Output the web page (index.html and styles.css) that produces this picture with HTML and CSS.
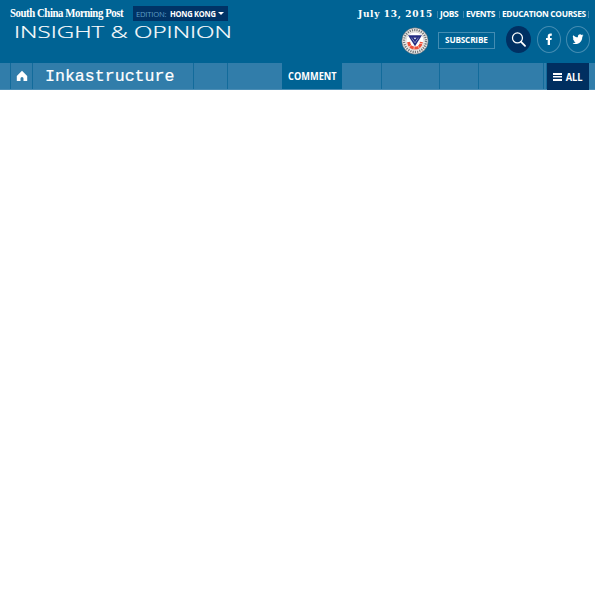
FILE: index.html
```html
<!DOCTYPE html>
<html lang="en">
<head>
<meta charset="utf-8">
<title>Insight &amp; Opinion</title>
<link rel="stylesheet" href="styles.css">
</head>
<body>
<header class="header">
  <div class="brand">
    <div class="brand-top">
      <span class="logo">South China Morning Post</span>
      <div class="edition"><span class="edition-label">EDITION:</span><b class="edition-name">HONG KONG</b><i class="caret"></i></div>
    </div>
    <h1 class="section-title">INSIGHT &amp; OPINION</h1>
  </div>
  <div class="tools">
    <div class="links">
      <span class="date">July 13, 2015</span>
      <a class="jobs"><span>JOBS</span></a><a class="events"><span>EVENTS</span></a><a class="courses"><span>EDUCATION COURSES</span></a><a class="end"></a>
    </div>
    <div class="actions">
      <svg class="seal" viewBox="0 0 28 28">
        <circle cx="14" cy="14" r="13.2" fill="#f3f1ee" stroke="#46545f" stroke-width=".6"/>
        <circle cx="14" cy="14" r="11" fill="none" stroke="#73777b" stroke-width="2.3" stroke-dasharray="1.3 1"/>
        <circle cx="14" cy="14" r="9" fill="#fff" stroke="#aaa" stroke-width=".4"/>
        <path d="M7.6 15q.8 6 6.4 6t6.4-6" fill="none" stroke="#ee5038" stroke-width="3" stroke-dasharray="4 .5"/>
        <path d="M7 8.3h14L14 19.3z" fill="#252d83"/>
        <path d="M10.3 10.7h7.4L14 16z" fill="#fff"/>
        <path d="M11.3 10.2l2.7 3.9 2.7-3.9" fill="none" stroke="#252d83" stroke-width="1.7"/>
      </svg>
      <a class="subscribe"><span>SUBSCRIBE</span></a>
      <a class="round search"><svg viewBox="0 0 24 26"><circle cx="11" cy="11.5" r="4.8" fill="none" stroke="#fff" stroke-width="1.2"/><path d="M14.5 15.2l3.8 4" stroke="#fff" stroke-width="1.7" stroke-linecap="round"/></svg></a>
      <a class="round facebook"><svg viewBox="1 1.5 22 23"><path d="M10.7 18.5v-5H9v-2.1h1.7V10c0-2 1-3 2.8-3h1.3v2.2h-1c-.6 0-.8.4-.8.9v1.3h1.8l-.3 2.1H13v5z" fill="#fff"/></svg></a>
      <a class="round twitter"><svg viewBox="1 1.5 22 23"><path d="M7.2 8.7c1.2 1.3 2.9 2 4.7 2.1-.4-3 2.4-3.7 3.8-2.3l1.5-.5-.8 1.2 1.1-.2-1.2 1.2c.1 4.9-3.6 7.9-7.6 7.3-.9-.1-1.6-.4-2.1-.8 1.2 0 2.1-.2 3-.9-1-.1-1.7-.9-2-1.7h1c-1.1-.4-1.7-1.4-1.7-2.4l.9.2c-1-.8-1.2-2.2-.6-3.2z" fill="#fff"/></svg></a>
    </div>
  </div>
</header>
<nav class="nav">
  <span class="cell gutter"></span>
  <a class="cell home"><svg viewBox="0 0 12 12"><path d="M6 .8L11.2 6v5H7.5V8.6a1.5 1.5 0 0 0-3 0V11H.8V6z" fill="#fff"/></svg></a>
  <a class="cell title"><span>Inkastructure</span></a>
  <span class="cell c1"></span>
  <span class="cell c2"></span>
  <a class="comment"><span>COMMENT</span></a>
  <span class="cell c3"></span>
  <span class="cell c4"></span>
  <span class="cell c5"></span>
  <span class="cell c6"></span>
  <span class="cell c7"></span>
  <a class="all"><i class="burger"></i><span>ALL</span></a>
</nav>
<main class="content"></main>
</body>
</html>
```
FILE: styles.css
```css
* { box-sizing: border-box; }
body { margin: 0; background: #fff; color: #fff; font-family: "Open Sans", sans-serif; overflow: hidden; }
.header { height: 63px; background: #006394; display: flex; justify-content: space-between; white-space: nowrap; }
.brand { padding: 6px 0 0 10px; }
.brand-top { display: flex; height: 15px; }
.logo { width: 123px; font: bold 12px/15px "Liberation Serif", serif; letter-spacing: -0.5px; transform: scaleX(0.9); transform-origin: 0 0; }
.edition { width: 95px; background: #003366; display: flex; align-items: center; padding-left: 3px; font-size: 8px; line-height: 15px; }
.edition-label { width: 34px; color: #5c9dc4; letter-spacing: -0.25px; transform: scaleX(0.96); transform-origin: 0 0; }
.edition-name { width: 48px; transform: scaleX(0.94); letter-spacing: -0.25px; transform-origin: 0 0; }
.caret { border: 3px solid transparent; border-top: 3px solid #fff; border-bottom: 0; }
.section-title { margin: 0 0 0 4px; font-size: 17px; line-height: 22px; font-weight: 300; -webkit-text-stroke: 0.2px #fff; transform: scaleX(1.42); transform-origin: 0 0; width: 150px; }
.tools { width: 237px; padding-top: 7px; }
.links { display: flex; height: 14px; font-size: 9px; line-height: 14px; font-weight: 700; }
.links a { background: linear-gradient(#3c86ad, #3c86ad) 0 4px / 1px 7px no-repeat; padding-left: 3px; letter-spacing: -0.35px; }
.links a span { display: inline-block; transform: scaleX(0.93); transform-origin: 0 0; }
.date { width: 79px; font: bold 9px/14px "DejaVu Serif", serif; letter-spacing: 0.65px; }
.jobs { width: 26px; }
.events { width: 36px; }
.courses { width: 89px; }
.end { width: 5px; }
.actions { display: flex; align-items: center; height: 30px; margin-top: 4px; padding-left: 43px; }
.seal { width: 28px; height: 28px; margin-top: 2px; }
.subscribe { width: 57px; height: 17px; margin: 0 11px 0 9px; border: 1px solid #438cb2; display: flex; align-items: center; justify-content: center; font-size: 9px; font-weight: 700; letter-spacing: -0.2px; }
.subscribe span { transform: translateY(-1px) scaleX(0.91); }
.round { width: 25px; height: 27px; border-radius: 50%; display: flex; flex: none; margin-top: -1px; }
.round svg { width: 100%; height: 100%; }
.search { background: #003063; }
.facebook, .twitter { border: 1px solid #438cb2; width: 24px; }
.facebook { margin-left: 6px; }
.twitter { margin-left: 5px; }
.nav { height: 27px; background: #317daa; display: flex; border-bottom: 1px solid #4b8db5; }
.cell { border-right: 1px solid #126b9b; flex: none; display: flex; align-items: center; }
.gutter { width: 11px; }
.home { width: 22px; justify-content: center; }
.home svg { width: 12px; height: 12px; }
.title { width: 161px; padding-left: 12px; font: 16.6px "Liberation Mono", monospace; -webkit-text-stroke: 0.2px #fff; }
.c1 { width: 34px; }
.c2 { width: 54px; border: 0; }
.c3 { width: 40px; }
.c4 { width: 58px; }
.c5 { width: 39px; }
.c6 { width: 65px; }
.c7 { width: 3px; }
.comment, .all { display: flex; align-items: center; justify-content: center; font-weight: 700; font-size: 10px; }
.comment span { transform: scaleX(0.92); }
.comment { width: 60px; background: #006394; }
.all { width: 42px; height: 27px; background: #002f60; gap: 3px; }
.all span { transform: scaleX(0.93); }
.burger { width: 9px; height: 8px; border-top: 2px solid #fff; border-bottom: 2px solid #fff; background: linear-gradient(#fff, #fff) 0 50% / 100% 1.5px no-repeat; }
.content { height: 505px; }
```
